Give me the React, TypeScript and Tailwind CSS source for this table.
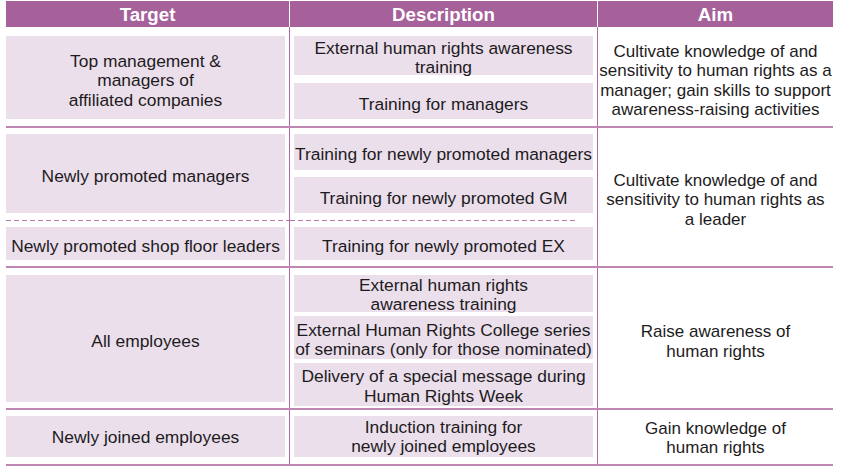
import React from "react";

const Pink = ({
  children,
  className = "",
  pt = "pt-[7px]",
}: {
  children?: React.ReactNode;
  className?: string;
  pt?: string;
}) => (
  <div className={`bg-[#ebdfec] flex items-center justify-center text-center whitespace-nowrap ${className}`}>
    <div className={pt}>{children}</div>
  </div>
);

const HLine = () => <div className="h-[2px] bg-[#bf86b4]" />;

const Dash = ({ className = "" }: { className?: string }) => (
  <div className={`h-px bg-[linear-gradient(to_right,#b577a9_0_5px,transparent_5px_8px)] bg-[length:8px_1px] ${className}`} />
);

const Aim = ({ children, pt = "pt-[8px]" }: { children: React.ReactNode; pt?: string }) => (
  <div className="flex-1 flex items-center justify-center text-center whitespace-nowrap text-[17px]">
    <div className={pt}>{children}</div>
  </div>
);

export default function App() {
  return (
    <div className="w-[841px] h-[474px] bg-white pt-px pl-[6px] text-[#1e1b1d] font-['Liberation_Sans',Arial,sans-serif] text-[17.4px] leading-[19.5px]">
      <div className="w-[827px]">
        {/* Header */}
        <div className="flex h-[26px] bg-[#a6619b] text-white font-bold text-[18.7px] leading-none">
          <div className="w-[283px] flex items-center justify-center pt-[2px]">Target</div>
          <div className="w-px bg-white" />
          <div className="w-[307px] flex items-center justify-center pt-[2px]">Description</div>
          <div className="w-px bg-white" />
          <div className="flex-1 flex items-center justify-center pt-[2px]">Aim</div>
        </div>

        {/* Row 1 */}
        <div className="flex h-[99px]">
          <div className="w-[284px] border-r border-[#ae68a3] pt-[9px] pb-[7px] pr-[4px] flex">
            <Pink className="flex-1">
              Top management &amp;<br />managers of<br />affiliated companies
            </Pink>
          </div>
          <div className="w-[308px] border-r border-[#ae68a3] pt-[9px] pb-[7px] px-[4px] flex flex-col gap-[8px]">
            <Pink className="h-[39px]" pt="pt-[5px]">
              External human rights awareness<br />training
            </Pink>
            <Pink className="flex-1">Training for managers</Pink>
          </div>
          <Aim>
            Cultivate knowledge of and<br />sensitivity to human rights as a<br />manager; gain skills to support<br />awareness-raising activities
          </Aim>
        </div>
        <HLine />

        {/* Row 2 + 3 */}
        <div className="flex h-[138px]">
          <div className="w-[592px] flex flex-col">
            <div className="flex h-[85px]">
              <div className="w-[284px] border-r border-[#ae68a3] pt-[6px] pr-[4px] flex">
                <Pink className="flex-1">Newly promoted managers</Pink>
              </div>
              <div className="w-[308px] border-r border-[#ae68a3] pt-[6px] px-[4px] flex flex-col gap-[7px]">
                <Pink className="h-[36px]" pt="pt-[5px]">Training for newly promoted managers</Pink>
                <Pink className="flex-1">Training for newly promoted GM</Pink>
              </div>
            </div>
            <div className="flex h-[14px]">
              <div className="w-[284px] border-r border-[#ae68a3] pt-[7px]">
                <Dash />
              </div>
              <div className="w-[308px] border-r border-[#ae68a3] pt-[7px]">
                <Dash className="w-[285px]" />
              </div>
            </div>
            <div className="flex flex-1">
              <div className="w-[284px] border-r border-[#ae68a3] pb-[6px] pr-[4px] flex">
                <Pink className="flex-1">Newly promoted shop floor leaders</Pink>
              </div>
              <div className="w-[308px] border-r border-[#ae68a3] pb-[6px] px-[4px] flex">
                <Pink className="flex-1">Training for newly promoted EX</Pink>
              </div>
            </div>
          </div>
          <Aim pt="pt-[6px]">
            Cultivate knowledge of and<br />sensitivity to human rights as<br />a leader
          </Aim>
        </div>
        <HLine />

        {/* Row 4 */}
        <div className="flex h-[140px]">
          <div className="w-[284px] border-r border-[#ae68a3] pt-[7px] pb-[6px] pr-[4px] flex">
            <Pink className="flex-1">All employees</Pink>
          </div>
          <div className="w-[308px] border-r border-[#ae68a3] pt-[7px] pb-[6px] px-[4px] flex flex-col gap-[4px]">
            <Pink className="h-[37px]" pt="pt-[3px]">
              External human rights<br />awareness training
            </Pink>
            <Pink className="h-[43px]" pt="pt-[5px]">
              External Human Rights College series<br />of seminars (only for those nominated)
            </Pink>
            <Pink className="flex-1" pt="pt-[4px]">
              Delivery of a special message during<br />Human Rights Week
            </Pink>
          </div>
          <Aim pt="pt-[7px]">
            Raise awareness of<br />human rights
          </Aim>
        </div>
        <HLine />

        {/* Row 5 */}
        <div className="flex h-[54px]">
          <div className="w-[284px] border-r border-[#ae68a3] pt-[6px] pb-[7px] pr-[4px] flex">
            <Pink className="flex-1" pt="pt-[3px]">Newly joined employees</Pink>
          </div>
          <div className="w-[308px] border-r border-[#ae68a3] pt-[6px] pb-[7px] px-[4px] flex">
            <Pink className="flex-1" pt="pt-[1px]">
              Induction training for<br />newly joined employees
            </Pink>
          </div>
          <Aim pt="pt-[2px]">
            Gain knowledge of<br />human rights
          </Aim>
        </div>
        <HLine />
      </div>
    </div>
  );
}
